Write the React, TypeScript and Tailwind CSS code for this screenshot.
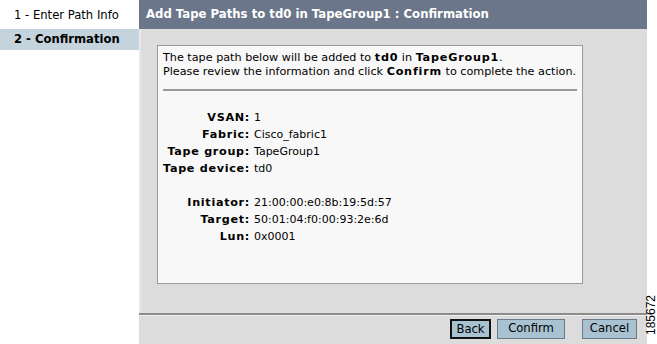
import React from 'react';

const details: [string, string][] = [
  ['VSAN:', '1'],
  ['Fabric:', 'Cisco_fabric1'],
  ['Tape group:', 'TapeGroup1'],
  ['Tape device:', 'td0'],
];

const paths: [string, string][] = [
  ['Initiator:', '21:00:00:e0:8b:19:5d:57'],
  ['Target:', '50:01:04:f0:00:93:2e:6d'],
  ['Lun:', '0x0001'],
];

function Row({ label, value }: { label: string; value: string }) {
  return (
    <div className="flex h-[17px] items-center">
      <span className="w-[87px] shrink-0 whitespace-nowrap text-right font-bold tracking-[0.7px]">{label}</span>
      <span className="ml-[4px] text-[11px]">{value}</span>
    </div>
  );
}

export default function App() {
  return (
    <div className="relative flex h-[344px] w-[657px] overflow-hidden bg-white text-[11.2px] text-black font-['DejaVu_Sans',Verdana,sans-serif]">
      {/* Steps */}
      <div className="w-[139px] shrink-0 pt-[6px] text-[11.6px]">
        <div className="h-[19px] pl-[14px] leading-[19px]">1 - Enter Path Info</div>
        <div className="mt-[4px] h-[21px] bg-[#c4d3dc] pl-[14px] font-bold leading-[21px]">2 - Confirmation</div>
      </div>

      {/* Main */}
      <div className="flex w-[508px] flex-col bg-[#dcdcdc]">
        <div className="flex h-[29px] items-center bg-[#6b768a] pl-[7px] text-[11.7px] font-bold text-white">
          Add Tape Paths to td0 in TapeGroup1 : Confirmation
        </div>
        <div className="flex-1 border-l-2 border-[#e8e8e8] pl-[16px] pt-[16px]">
          <div className="h-[239px] w-[426px] border border-[#9a9a9a] bg-[#f8f8f8] px-[5px] pt-[5px]">
            <p className="whitespace-nowrap leading-[14px]">
              The tape path below will be added to <b className="tracking-[0.8px]">td0</b> in{' '}
              <b className="tracking-[0.8px]">TapeGroup1</b>.
              <br />
              Please review the information and click <b className="tracking-[0.8px]">Confirm</b> to complete the action.
            </p>
            <div className="mt-[10px] border-t-2 border-[#9a9a9a]" />
            <div className="mt-[19px]">
              {details.map(([l, v]) => (
                <Row key={l} label={l} value={v} />
              ))}
            </div>
            <div className="mt-[17px]">
              {paths.map(([l, v]) => (
                <Row key={l} label={l} value={v} />
              ))}
            </div>
          </div>
        </div>
        <div className="h-[31px] border-t-2 border-[#8c8c8c]">
          <div className="flex h-full justify-end gap-[6px] border-t border-[#f0f0f0] pr-[10px] pt-[3px] text-[11.6px]">
            <button className="h-[20px] w-[41px] border-2 border-[#111] bg-[#a8c2d1]">Back</button>
            <button className="h-[20px] w-[68px] border border-[#6b7a86] bg-[#a8c2d1]">Confirm</button>
            <button className="ml-[11px] h-[20px] w-[55px] border border-[#6b7a86] bg-[#a8c2d1]">Cancel</button>
          </div>
        </div>
      </div>

      <div className="w-[10px] shrink-0" />
      <span className="absolute left-[628px] top-[309px] w-[46px] -rotate-90 text-center text-[12px] leading-[12px] font-['Liberation_Sans',sans-serif]">
        185672
      </span>
    </div>
  );
}
